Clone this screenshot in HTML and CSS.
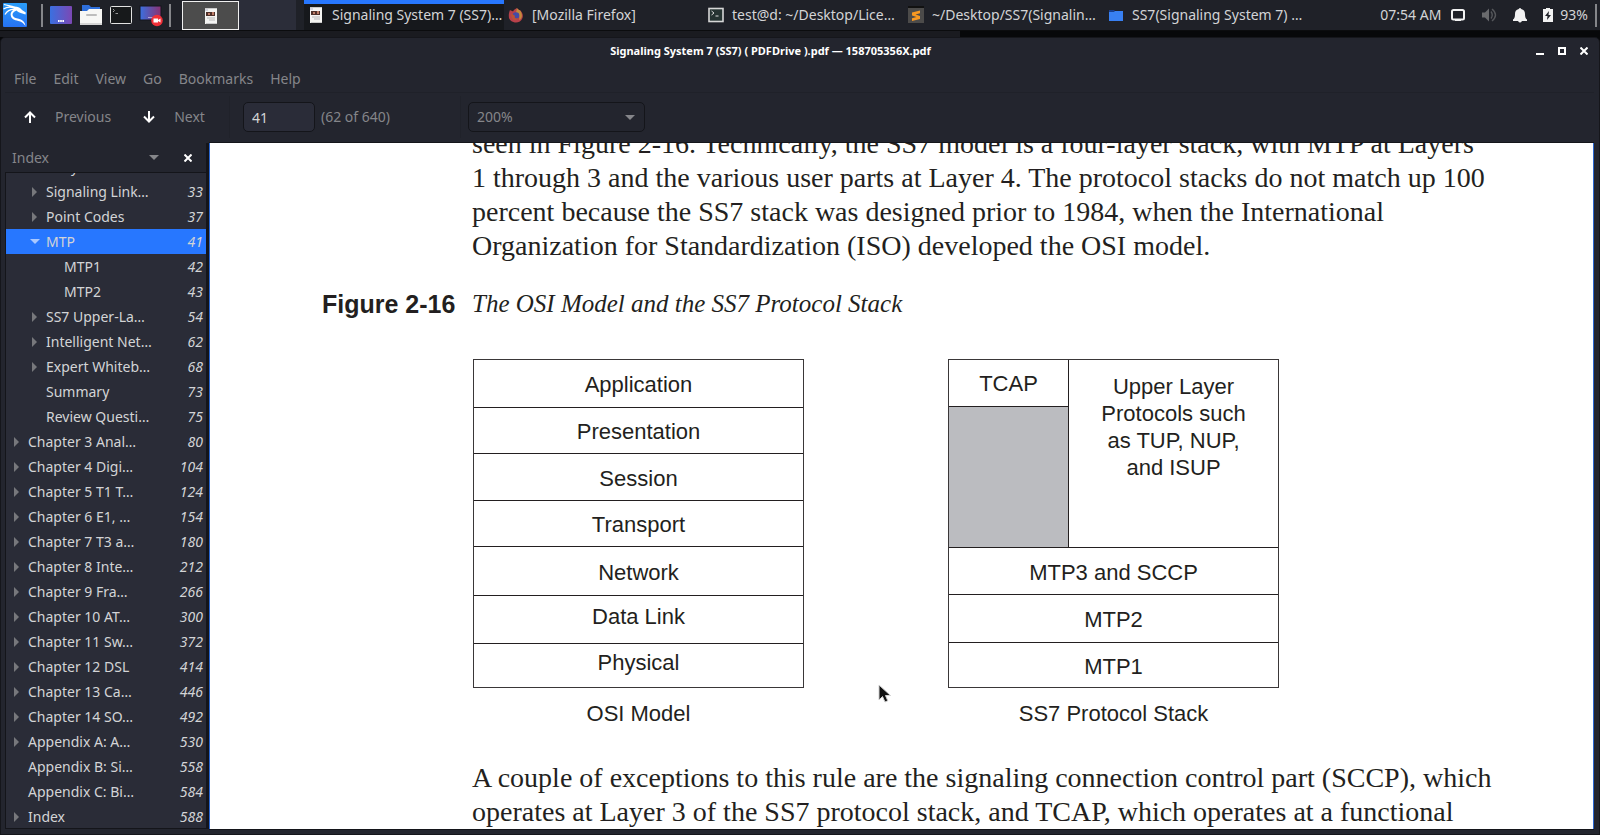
FILE: index.html
```html
<!DOCTYPE html>
<html lang="en">
<head>
<meta charset="utf-8">
<title>Signaling System 7 (SS7) ( PDFDrive ).pdf — 158705356X.pdf</title>
<link rel="stylesheet" href="styles.css">
</head>
<body>
<svg width="0" height="0" class="defs" aria-hidden="true">
  <defs>
    <linearGradient id="kali" x1="0" y1="0" x2="0" y2="1"><stop offset="0" stop-color="#2a9df8"/><stop offset="1" stop-color="#2672f5"/></linearGradient>
    <linearGradient id="desk" x1="0" y1="0" x2="1" y2="0"><stop offset="0" stop-color="#3a70e0"/><stop offset="1" stop-color="#7c48b4"/></linearGradient>
    <linearGradient id="rec" x1="0" y1="0" x2="1" y2="0"><stop offset="0" stop-color="#3a70e0"/><stop offset="1" stop-color="#8c3070"/></linearGradient>
    <symbol id="doc" viewBox="0 0 16 18">
      <path d="M2 2h12v15H2z" fill="#f4f4f2"/><path d="M2 1h12v1H2zM3 16h11v1H3z" fill="#c9c9c9"/>
      <path d="M3 5h9v4H3z" fill="#4e3029"/><path d="M5 6h2v2H5zM9 5h2v3H9z" fill="#bd7d68"/>
      <path d="M4 11h8M6 13h6" stroke="#b5b5b5"/><path d="M2 2h3v2H2z" fill="#d6d6e0"/>
    </symbol>
    <symbol id="tri-right" viewBox="0 0 6 10"><path d="M0 0l5 5-5 5z" fill="currentColor"/></symbol>
    <symbol id="tri-down" viewBox="0 0 10 5"><path d="M0 0h10L5 5z" fill="currentColor"/></symbol>
  </defs>
</svg>
<header class="panel">
  <nav class="launchers" aria-label="Launchers">
    <button class="launch" aria-label="Applications"><svg width="24" height="24" viewBox="0 0 24 24"><rect width="24" height="24" rx="1" fill="url(#kali)"/><path d="M1 1.500C5 3 9 2.500 13 5M0.500 6C4.500 3.500 9 3.800 13.500 6M2 11.500C4 8 8 6 12.500 6.500" fill="none" stroke="#fff" stroke-width="1.300"/><path d="M11 3.500c4 .2 7 1.500 8 3.500l3.800 2.500-.3 2-4-1.300c-2-.7-3.500-1.200-5-2.700C10.500 8.500 9 10.500 9.700 12.500c.8 2.300 3 2.300 6 3.300 4 1.300 6.200 3.200 6.800 7.200-2.200-3.500-4.200-4.600-7.200-5.100-4-.7-7-2-7.500-5.400C7.300 9.500 9 7 12.500 6z" fill="#fff"/></svg></button>
    <span class="rule"></span>
    <button class="launch" aria-label="Show desktop"><svg width="24" height="24" viewBox="0 0 24 24"><rect x="1" y="3" width="22" height="18" rx="1" fill="url(#desk)"/><path d="M9 18h6" stroke="#fff" stroke-width="2" stroke-dasharray="1.600 .6"/></svg></button>
    <button class="launch" aria-label="Files"><svg width="24" height="24" viewBox="0 0 24 24"><path d="M3 2h7l2 2h9v7H3z" fill="#2e6fdb"/><path d="M1 8h7l2-2h13v15H1z" fill="#f7f7f5"/><path d="M1 20h22v2H1z" fill="#d5d5d5"/><path d="M8 12h9" stroke="#bdbdbd" stroke-width="2" stroke-linecap="round"/></svg></button>
    <button class="launch" aria-label="Terminal"><svg width="24" height="24" viewBox="0 0 24 24"><rect x="1.500" y="3.500" width="21" height="17" rx="1" fill="#17191b" stroke="#e2e2e2"/><path d="M4 6l1.500 1.500L4 9M6.500 10.500H9" fill="none" stroke="#999"/></svg></button>
    <button class="launch" aria-label="Screen recorder"><svg width="24" height="24" viewBox="0 0 24 24"><rect x="1" y="3" width="21" height="14" fill="url(#rec)" stroke="#14161c"/><path d="M9.500 14.500h5" stroke="#fff" stroke-dasharray="1 1"/><circle cx="18" cy="17.500" r="5.800" fill="#f03038"/><path d="M14.500 15.500h4.500v1.500l2.500-1.500v4l-2.500-1.500v1.500h-4.500z" fill="#fff"/></svg></button>
    <span class="rule"></span>
  </nav>
  <div class="spaces">
    <button class="space space-on" aria-label="Workspace 1"><svg width="16" height="18"><use href="#doc"/></svg></button>
    <button class="space" aria-label="Workspace 2"></button>
  </div>
  <nav class="tasks" aria-label="Windows">
    <button class="task task-on"><svg width="16" height="18"><use href="#doc"/></svg><span>Signaling System 7 (SS7)…</span></button>
    <button class="task"><svg width="16" height="18" viewBox="0 0 16 18"><path d="M2 4c1 1 2 .5 3 1.500C6 3 8 3 9 2c.5 1.500 2 2 3 2 2.500 3 3.500 5 2.500 8-1 3-4 4.500-6.500 4.500S2 15 1 12C.500 9 1 6 2 4z" fill="#b8414a"/><path d="M9 2c1 2 4 2.500 4 4 2 4 .500 7-2 8 1-3 0-6-3-7z" fill="#c48b3c"/><circle cx="8" cy="9.500" r="3.300" fill="#444aa6"/><path d="M3 8c2 0 3 1 4 2-1 2 1 3 3 2-2 4-7 2-7-4z" fill="#bc5236"/></svg><span>[Mozilla Firefox]</span></button>
    <button class="task"><svg width="16" height="18" viewBox="0 0 16 18"><rect x="1" y="2.500" width="14" height="13" fill="#263432" stroke="#d6d6d6" stroke-width="1.600"/><path d="M3.500 5l2.500 2-2.500 2M7.500 10h3" fill="none" stroke="#ddd"/></svg><span>test@d: ~/Desktop/Lice…</span></button>
    <button class="task"><svg width="16" height="18" viewBox="0 0 16 18"><path d="M0 1h16v16H0z" fill="#4c4b4a"/><path d="M0 1h16" stroke="#111" stroke-width="2"/><path d="M12 4.500v2.800L7.500 8.600 12 10v3L4 15v-2.700l4.500-1.300L4 9.500v-3z" fill="#f89822"/></svg><span>~/Desktop/SS7(Signalin…</span></button>
    <button class="task"><svg width="16" height="18" viewBox="0 0 16 18"><path d="M1 4h5l1 1h8v9H1z" fill="#173f8f"/><path d="M1 6h5l1-1h8v10H1z" fill="#3880f2"/></svg><span>SS7(Signaling System 7) …</span></button>
  </nav>
  <div class="status">
    <time class="clock">07:54 AM</time>
    <svg width="14" height="16" viewBox="0 0 14 16"><rect x="1" y="3" width="12" height="9.500" rx="1.500" fill="none" stroke="#f2f2f2" stroke-width="2"/><path d="M4 13.500h6" stroke="#f2f2f2"/></svg>
    <svg width="16" height="16" viewBox="0 0 16 16"><path d="M1 5.500h3L8 1.500v13L4 10.500H1z" fill="#696a6d"/><path d="M10 4.500q2.500 3.500 0 7M11 2q7 6 0 12" fill="none" stroke="#55575b" stroke-width="1.400"/></svg>
    <svg width="14" height="16" viewBox="0 0 14 16"><path d="M7 1c1 0 1 .8 1.200 1C11 2.500 12 4.500 12 7c0 3 .5 4.500 2 5.500V14H0v-1.500C1.500 11.500 2 10 2 7c0-2.500 1-4.500 3.800-5C6 1.800 6 1 7 1zM5 14h4q-2 3-4 0z" fill="#f2f2f2"/></svg>
    <span class="battery"><svg width="10" height="16" viewBox="0 0 10 16"><path d="M3 1h4v1h3v13H0V2h3z" fill="#f2f2f2"/><path d="M6 4L2 9h2.500L4 13l4-5H5.500z" fill="#1f2128"/></svg>93%</span>
    <span class="rule"></span>
  </div>
</header>
<div class="backdrop"></div>
<main class="window">
  <div class="titlebar">
    <h1 class="title">Signaling System 7 (SS7) ( PDFDrive ).pdf — 158705356X.pdf</h1>
    <div class="controls">
      <button class="control" aria-label="Minimize"><svg width="8" height="8"><path d="M0 7h8" stroke="#fff" stroke-width="2"/></svg></button>
      <button class="control" aria-label="Maximize"><svg width="8" height="8"><rect x="1" y="1" width="6" height="6" fill="none" stroke="#fff" stroke-width="2"/></svg></button>
      <button class="control" aria-label="Close"><svg width="8" height="8"><path d="M0.500 0.500l7 7m0-7l-7 7" stroke="#fff" stroke-width="2"/></svg></button>
    </div>
  </div>
  <nav class="menubar" aria-label="Menu">
    <button class="menu">File</button><button class="menu">Edit</button><button class="menu">View</button><button class="menu">Go</button><button class="menu">Bookmarks</button><button class="menu">Help</button>
  </nav>
  <div class="toolbar">
    <div class="steps">
      <button class="step"><svg width="12" height="12" viewBox="0 0 12 12"><path d="M6 12V1.500M1 6.500l5-5 5 5" fill="none" stroke="#fff" stroke-width="2"/></svg>Previous</button>
      <button class="step"><svg width="12" height="12" viewBox="0 0 12 12"><path d="M6 0v10.500M1 5.500l5 5 5-5" fill="none" stroke="#fff" stroke-width="2"/></svg>Next</button>
    </div>
    <div class="pager"><input class="field" type="text" value="41" aria-label="Page" id="page"><label for="page">(62 of 640)</label></div>
    <div class="zoom"><select class="field" aria-label="Zoom"><option>200%</option></select><svg class="zoom-arrow" width="10" height="5"><use href="#tri-down"/></svg></div>
  </div>
  <div class="content">
    <aside class="sidebar">
      <div class="side-head"><button class="side-title">Index<svg width="10" height="5"><use href="#tri-down"/></svg></button><button class="control" aria-label="Close sidebar"><svg width="8" height="8"><path d="M0.500 0.500l7 7m0-7l-7 7" stroke="#fff" stroke-width="2"/></svg></button></div>
      <div class="outline">
        <ul class="tree">
          <li class="node level2"><svg class="twist"></svg><span>Early</span></li>
          <li class="node level2"><svg class="twist"><use href="#tri-right"/></svg><span>Signaling Link…</span><i>33</i></li>
          <li class="node level2"><svg class="twist"><use href="#tri-right"/></svg><span>Point Codes</span><i>37</i></li>
          <li class="node level2 current"><svg class="twist open"><use href="#tri-down"/></svg><span>MTP</span><i>41</i></li>
          <li class="node level3"><span>MTP1</span><i>42</i></li>
          <li class="node level3"><span>MTP2</span><i>43</i></li>
          <li class="node level2"><svg class="twist"><use href="#tri-right"/></svg><span>SS7 Upper-La…</span><i>54</i></li>
          <li class="node level2"><svg class="twist"><use href="#tri-right"/></svg><span>Intelligent Net…</span><i>62</i></li>
          <li class="node level2"><svg class="twist"><use href="#tri-right"/></svg><span>Expert Whiteb…</span><i>68</i></li>
          <li class="node level2"><svg class="twist"></svg><span>Summary</span><i>73</i></li>
          <li class="node level2"><svg class="twist"></svg><span>Review Questi…</span><i>75</i></li>
          <li class="node"><svg class="twist"><use href="#tri-right"/></svg><span>Chapter 3 Anal…</span><i>80</i></li>
          <li class="node"><svg class="twist"><use href="#tri-right"/></svg><span>Chapter 4 Digi…</span><i>104</i></li>
          <li class="node"><svg class="twist"><use href="#tri-right"/></svg><span>Chapter 5 T1 T…</span><i>124</i></li>
          <li class="node"><svg class="twist"><use href="#tri-right"/></svg><span>Chapter 6 E1, …</span><i>154</i></li>
          <li class="node"><svg class="twist"><use href="#tri-right"/></svg><span>Chapter 7 T3 a…</span><i>180</i></li>
          <li class="node"><svg class="twist"><use href="#tri-right"/></svg><span>Chapter 8 Inte…</span><i>212</i></li>
          <li class="node"><svg class="twist"><use href="#tri-right"/></svg><span>Chapter 9 Fra…</span><i>266</i></li>
          <li class="node"><svg class="twist"><use href="#tri-right"/></svg><span>Chapter 10 AT…</span><i>300</i></li>
          <li class="node"><svg class="twist"><use href="#tri-right"/></svg><span>Chapter 11 Sw…</span><i>372</i></li>
          <li class="node"><svg class="twist"><use href="#tri-right"/></svg><span>Chapter 12 DSL</span><i>414</i></li>
          <li class="node"><svg class="twist"><use href="#tri-right"/></svg><span>Chapter 13 Ca…</span><i>446</i></li>
          <li class="node"><svg class="twist"><use href="#tri-right"/></svg><span>Chapter 14 SO…</span><i>492</i></li>
          <li class="node"><svg class="twist"><use href="#tri-right"/></svg><span>Appendix A: A…</span><i>530</i></li>
          <li class="node"><svg class="twist"></svg><span>Appendix B: Si…</span><i>558</i></li>
          <li class="node"><svg class="twist"></svg><span>Appendix C: Bi…</span><i>584</i></li>
          <li class="node"><svg class="twist"><use href="#tri-right"/></svg><span>Index</span><i>588</i></li>
        </ul>
      </div>
    </aside>
    <section class="viewer">
      <article class="page">
        <p class="prose">seen in Figure 2-16. Technically, the SS7 model is a four-layer stack, with MTP at Layers<br>1 through 3 and the various user parts at Layer 4. The protocol stacks do not match up 100<br>percent because the SS7 stack was designed prior to 1984, when the International<br>Organization for Standardization (ISO) developed the OSI model.</p>
        <h2 class="label">Figure 2-16</h2>
        <p class="caption">The OSI Model and the SS7 Protocol Stack</p>
        <div class="figures">
          <figure class="figure">
            <div class="stack osi">
              <div class="layer">Application</div><div class="layer">Presentation</div><div class="layer">Session</div><div class="layer">Transport</div><div class="layer">Network</div><div class="layer high">Data Link</div><div class="layer high">Physical</div>
            </div>
            <figcaption>OSI Model</figcaption>
          </figure>
          <figure class="figure">
            <div class="stack ss7">
              <div class="layer tcap">TCAP</div><div class="layer shaded"></div>
              <div class="layer upper">Upper Layer<br>Protocols such<br>as TUP, NUP,<br>and ISUP</div>
              <div class="layer wide">MTP3 and SCCP</div><div class="layer wide">MTP2</div><div class="layer wide">MTP1</div>
            </div>
            <figcaption>SS7 Protocol Stack</figcaption>
          </figure>
        </div>
        <p class="prose">A couple of exceptions to this rule are the signaling connection control part (SCCP), which<br>operates at Layer 3 of the SS7 protocol stack, and TCAP, which operates at a functional</p>
      </article>
      <svg class="pointer" width="14" height="20" viewBox="0 0 14 20"><path d="M1 1v15l3.500-3.500L7 18l2.800-1.200L7.500 11.500h5z" fill="#111" stroke="#d0d0d0"/></svg>
    </section>
  </div>
</main>
</body>
</html>
```
FILE: styles.css
```css
* { box-sizing: border-box; }
body {
  margin: 0;
  height: 100vh;
  display: flex;
  flex-direction: column;
  overflow: hidden;
  background: #07080a;
  color: #d3d4d6;
  font: 14px/20px "Noto Sans", sans-serif;
}
.defs { position: absolute; }
svg { flex: none; display: block; }
button {
  padding: 0;
  border: 0;
  background: none;
  color: inherit;
  font: inherit;
  white-space: nowrap;
}

/* Desktop panel */
.panel {
  flex: none;
  height: 31px;
  display: flex;
  background: #1f2128;
  border-bottom: 1px solid #0b0c0e;
}
.launchers { display: flex; align-items: center; gap: 6px; padding: 0 11px 0 3px; }
.launchers .rule:first-of-type { margin-left: 8px; }
.rule { width: 2px; height: 23px; background: #85868a; }
.spaces { display: flex; }
.space { width: 57px; background: #2b2d39; display: grid; place-items: center; }
.space-on { background: #4c4c4c; border: 1px solid #f0f0f0; margin-top: 1px; }
.tasks { flex: 1; display: flex; padding-left: 8px; }
.task { width: 200px; display: flex; align-items: center; gap: 8px; padding: 0 4px; }
.task-on { background: #16181c; box-shadow: inset 0 4px #2777ff; }
.status { display: flex; align-items: center; gap: 16px; padding-right: 3px; }
.clock { margin-right: -6px; }
.battery { display: flex; align-items: center; gap: 7px; margin-right: -9px; }

.backdrop { flex: none; height: 6px; background: linear-gradient(90deg, #1a1b20 60%, #07080a 60%); }

/* Document window */
.window {
  flex: 1;
  min-height: 0;
  display: flex;
  flex-direction: column;
  background: #23252e;
  border: 1px solid #15161b;
  border-radius: 5px 5px 0 0;
  padding: 0 5px 5px 4px;
}
.titlebar { height: 28px; display: flex; align-items: center; padding-bottom: 2px; }
.title { flex: 1; margin: 0; text-align: center; color: #fff; font-size: 11px; font-weight: 700; line-height: 18px; }
.controls { display: flex; gap: 14px; padding-right: 6px; }
.control { width: 8px; height: 8px; }
.menubar {
  height: 27px;
  display: flex;
  align-items: center;
  gap: 17px;
  padding-left: 9px;
  color: #85868a;
  border-bottom: 1px solid #1f2129;
}
.toolbar { height: 50px; display: flex; align-items: center; padding-bottom: 2px; color: #85868a; }
.steps { width: 225px; height: 42px; display: flex; gap: 32px; padding-left: 19px; border-right: 1px solid #20222a; }
.step { display: flex; align-items: center; gap: 19px; }
.pager { width: 231px; height: 42px; display: flex; align-items: center; gap: 6px; padding-left: 13px; border-right: 1px solid #20222a; }
.field {
  height: 30px;
  padding: 0 8px;
  border: 1px solid #14151a;
  border-radius: 5px;
  background: #23252e;
  color: #85868a;
  font: inherit;
  appearance: none;
}
input.field { width: 72px; background: #2a2c38; color: #d3d4d6; }
.zoom { position: relative; margin-left: 7px; }
.zoom .field { width: 177px; }
.zoom-arrow { position: absolute; right: 10px; top: 13px; }

.content { flex: 1; min-height: 0; display: flex; }
.sidebar { width: 204px; flex: none; display: flex; flex-direction: column; border-right: 3px solid #14151a; }
.side-head { height: 29px; display: flex; align-items: center; gap: 25px; padding: 0 14px 0 7px; color: #85868a; }
.side-title { flex: 1; display: flex; align-items: center; justify-content: space-between; }
.outline { flex: 1; overflow: hidden; background: #2a2c37; border: 1px solid #14151a; border-right: 0; }
.tree { list-style: none; margin: -19px 0 0; padding: 0; }
.node { height: 25px; display: flex; align-items: center; gap: 8px; padding: 0 3px 0 8px; white-space: nowrap; }
.node span { flex: 1; }
.level2 { padding-left: 26px; }
.level3 { padding-left: 58px; }
.twist { width: 6px; height: 10px; color: #77787c; }
.twist.open { width: 10px; height: 5px; margin: 0 -2px; color: #a9c8ff; }
.current { background: #2777ff; }

/* Rendered PDF page */
.viewer {
  flex: 1;
  position: relative;
  overflow: hidden;
  background: #fff;
  color: #231f20;
  border: solid #2a66d0;
  border-width: 0 1px;
  box-shadow: 0 -1px #14151a, 0 1px #14151a;
}
.page {
  max-width: 1159px;
  margin: -16px auto 0;
  display: grid;
  grid-template-columns: 150px 1fr;
}
.prose { grid-column: 2; margin: 0; font: 28px/34px "Liberation Serif", serif; white-space: nowrap; }
.label, .caption { margin: 24px 0 38px; font-size: 25px; line-height: 34px; white-space: nowrap; }
.label { font-family: "Liberation Sans", sans-serif; }
.caption { font-family: "Liberation Serif", serif; font-style: italic; }
.figures {
  grid-column: 2;
  display: flex;
  gap: 143px;
  margin-bottom: 34px;
  font: 22px/27px "Liberation Sans", sans-serif;
  text-align: center;
}
.figure { width: 332px; margin: 0; padding-left: 1px; }
.figure figcaption { padding-top: 12px; }
.stack { display: grid; border: 1px solid #3a3738; }
.osi { grid-template-rows: 48px 46px 47px 46px 49px 48px 43px; }
.ss7 { grid-template: 47px 141px 47px 48px 44px / 120px 1fr; }
.layer { display: grid; place-items: center; padding-top: 2px; border-bottom: 1px solid #231f20; }
.layer:last-child { border-bottom: 0; }
.high { padding-bottom: 8px; }
.tcap { padding-top: 0; border-right: 1px solid #231f20; }
.shaded { grid-row: 2; grid-column: 1; background: #bbbcc0; border-right: 1px solid #231f20; }
.upper { grid-area: 1 / 2 / 3 / 3; place-items: start center; padding-top: 13px; }
.wide { grid-column: 1 / 3; }
.pointer { position: absolute; left: 668px; top: 541px; }
```
